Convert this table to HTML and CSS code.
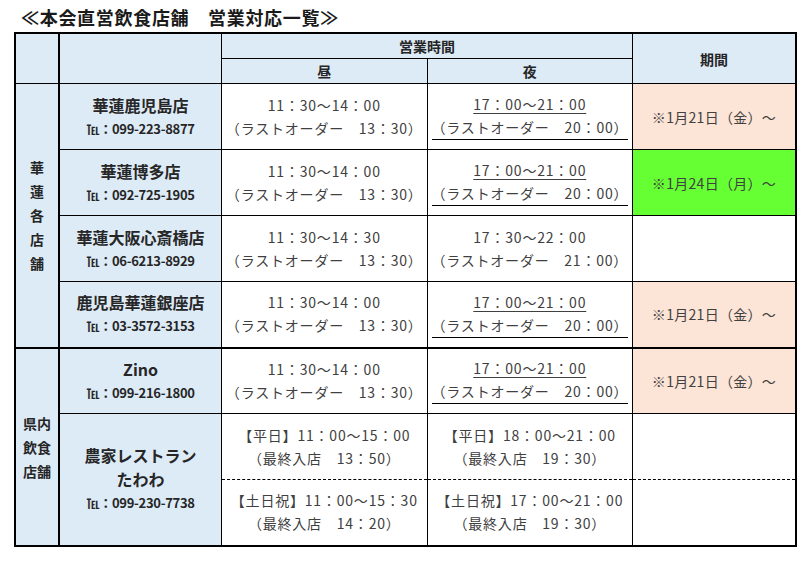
FILE: index.html
```html
<!DOCTYPE html>
<html lang="ja">
<head>
<meta charset="utf-8">
<title>本会直営飲食店舗 営業対応一覧</title>
<link rel="stylesheet" href="styles.css">
</head>
<body>
<h1 class="title">≪本会直営飲食店舗　営業対応一覧≫</h1>
<table class="schedule">
  <colgroup>
    <col class="c-group"><col class="c-name"><col class="c-time"><col class="c-time"><col class="c-period">
  </colgroup>
  <thead>
    <tr class="h1">
      <th rowspan="2" class="h-group"></th>
      <th rowspan="2" class="h-name"></th>
      <th colspan="2">営業時間</th>
      <th rowspan="2">期間</th>
    </tr>
    <tr class="h2">
      <th>昼</th>
      <th>夜</th>
    </tr>
  </thead>
  <tbody>
    <tr class="row">
      <th rowspan="4" class="group"><span>華</span><span>蓮</span><span>各</span><span>店</span><span>舗</span></th>
      <th class="name"><div class="shop">華蓮鹿児島店</div><div class="tel">℡：099-223-8877</div></th>
      <td class="time"><div>11：30～14：00</div><div>（ラストオーダー　13：30）</div></td>
      <td class="time ul"><div><span class="u">17：00～21：00</span></div><div class="uline">（ラストオーダー　20：00）</div></td>
      <td class="period peach">※1月21日（金）～</td>
    </tr>
    <tr class="row">
      <th class="name"><div class="shop">華蓮博多店</div><div class="tel">℡：092-725-1905</div></th>
      <td class="time"><div>11：30～14：00</div><div>（ラストオーダー　13：30）</div></td>
      <td class="time ul"><div><span class="u">17：00～21：00</span></div><div class="uline">（ラストオーダー　20：00）</div></td>
      <td class="period green">※1月24日（月）～</td>
    </tr>
    <tr class="row">
      <th class="name"><div class="shop">華蓮大阪心斎橋店</div><div class="tel">℡：06-6213-8929</div></th>
      <td class="time"><div>11：30～14：30</div><div>（ラストオーダー　13：30）</div></td>
      <td class="time"><div>17：30～22：00</div><div>（ラストオーダー　21：00）</div></td>
      <td class="period"></td>
    </tr>
    <tr class="row">
      <th class="name"><div class="shop">鹿児島華蓮銀座店</div><div class="tel">℡：03-3572-3153</div></th>
      <td class="time"><div>11：30～14：00</div><div>（ラストオーダー　13：30）</div></td>
      <td class="time ul"><div><span class="u">17：00～21：00</span></div><div class="uline">（ラストオーダー　20：00）</div></td>
      <td class="period peach">※1月21日（金）～</td>
    </tr>
    <tr class="row sep">
      <th rowspan="3" class="group"><span>県内</span><span>飲食</span><span>店舗</span></th>
      <th class="name"><div class="shop">Zino</div><div class="tel">℡：099-216-1800</div></th>
      <td class="time"><div>11：30～14：00</div><div>（ラストオーダー　13：30）</div></td>
      <td class="time ul"><div><span class="u">17：00～21：00</span></div><div class="uline">（ラストオーダー　20：00）</div></td>
      <td class="period peach">※1月21日（金）～</td>
    </tr>
    <tr class="row half first-half">
      <th rowspan="2" class="name"><div class="shop">農家レストラン</div><div class="shop">たわわ</div><div class="tel">℡：099-230-7738</div></th>
      <td class="time"><div>【平日】11：00～15：00</div><div>（最終入店　13：50）</div></td>
      <td class="time"><div>【平日】18：00～21：00</div><div>（最終入店　19：30）</div></td>
      <td class="period"></td>
    </tr>
    <tr class="row half second-half">
      <td class="time"><div>【土日祝】11：00～15：30</div><div>（最終入店　14：20）</div></td>
      <td class="time"><div>【土日祝】17：00～21：00</div><div>（最終入店　19：30）</div></td>
      <td class="period"></td>
    </tr>
  </tbody>
</table>
</body>
</html>
```
FILE: styles.css
```css
html, body {
  margin: 0;
  padding: 0;
  background: #fff;
}
body {
  padding: 5px 0 0 14px;
  font-family: "Noto Sans CJK JP", "Noto Sans", sans-serif;
  color: #262626;
}
.title {
  margin: 0 0 3px 7px;
  font-size: 18px;
  line-height: 24px;
  font-weight: bold;
  color: #1a1a1a;
  letter-spacing: 0.7px;
}
.schedule {
  border-collapse: collapse;
  table-layout: fixed;
  width: 783px;
  border: 2px solid #000;
}
.c-group { width: 44px; }
.c-name { width: 162px; }
.c-time { width: 205px; }
.c-period { width: 163px; }

.schedule th,
.schedule td {
  border: 1px solid #000;
  padding: 0;
  text-align: center;
  vertical-align: middle;
}
.schedule thead th {
  background: #ddebf7;
  font-size: 14px;
  font-weight: bold;
  line-height: 20px;
  color: #262626;
}
.h1 th { height: 24px; }
.h2 th { height: 24px; }

.group {
  background: #ddebf7;
  border-right-width: 2px !important;
  font-size: 14px;
  font-weight: bold;
  line-height: 24px;
}
.group span { display: block; }
.h-group { border-right-width: 2px !important; }

.name {
  background: #ddebf7;
  font-weight: bold;
}
.shop {
  font-size: 16px;
  line-height: 24px;
}
.tel {
  font-size: 13px;
  line-height: 24px;
  letter-spacing: -0.3px;
}
.row { height: 66px; }
.sep > * { border-top-width: 2px !important; }
.first-half > td { border-bottom: 1px dashed #000; }
.second-half > td { border-top: 1px dashed #000; }

.time {
  font-size: 14px;
  line-height: 23px;
  color: #404040;
  letter-spacing: 0.8px;
}
.u {
  text-decoration: underline;
  text-underline-offset: 3px;
}
.uline {
  margin: 0 4px 0 4px;
  border-bottom: 1px solid #000;
}
.period {
  font-size: 14px;
  color: #404040;
  letter-spacing: 0.3px;
}
.peach { background: #fce4d6; }
.green { background: #66ff33; }
```
